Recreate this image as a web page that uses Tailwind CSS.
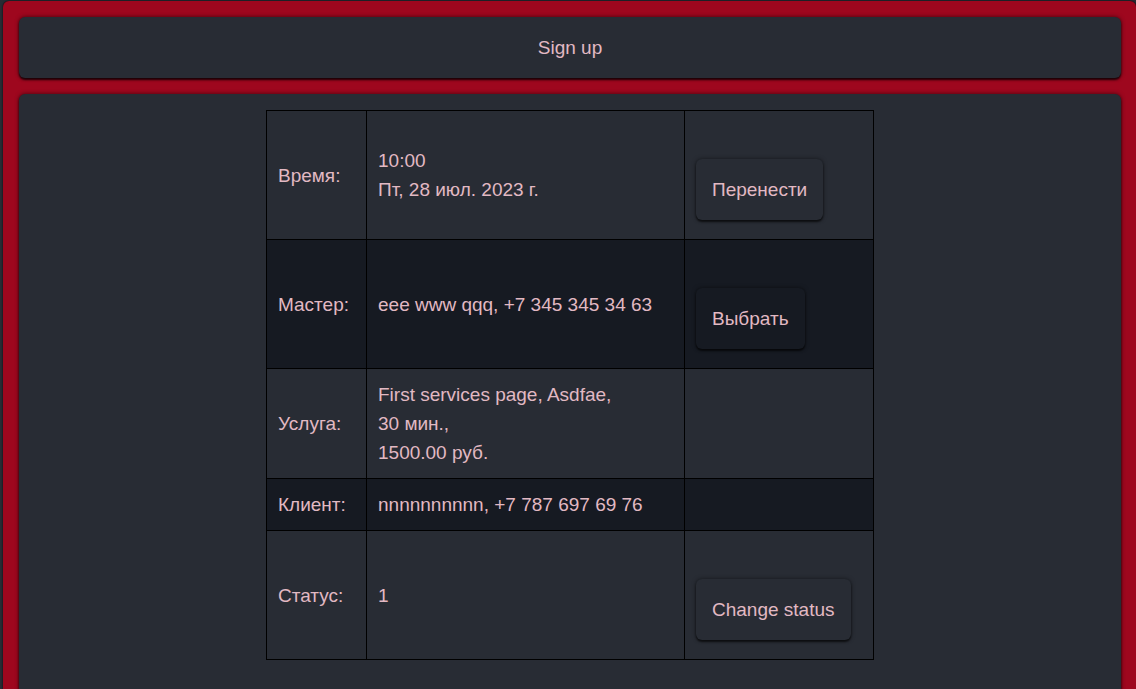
<!DOCTYPE html>
<html lang="ru">
<head>
<meta charset="utf-8">
<meta name="viewport" content="width=device-width, initial-scale=1">
<title>Sign up</title>
<script src="https://cdn.jsdelivr.net/npm/@tailwindcss/browser@4"></script>
</head>
<body class="bg-[#282c34] font-['Liberation_Sans',Arial,sans-serif] text-[19px] leading-[29px] text-[#e2b9c3]">
<main class="mt-px ml-[3px] flex min-h-[calc(100vh-1px)] flex-col gap-4 rounded-t-md bg-[#9e071e] pt-4 pr-[15px] pl-4 shadow-[0_0_2px_#000]">
  <button type="button" class="w-full rounded-md bg-[#282c34] p-4 text-center shadow-[0_2px_2px_rgb(0_0_0/0.75),0_0_4px_rgb(0_0_0/0.6)]">Sign up</button>
  <section class="flex grow flex-col items-center rounded-t-md bg-[#282c34] p-4 pb-8 shadow-[0_2px_2px_rgb(0_0_0/0.75),0_0_4px_rgb(0_0_0/0.6)]">
    <table class="w-[608px] max-w-full table-fixed border-collapse border border-black text-left [&_td]:border [&_td]:border-black [&_td]:px-[11px] [&_td]:py-[11px] [&_th]:border [&_th]:border-black [&_th]:px-[11px] [&_th]:py-[11px] [&_th]:font-normal">
      <colgroup><col class="w-[100px]"><col class="w-[318px]"><col class="w-[189px]"></colgroup>
      <tbody>
        <tr class="h-[129px]">
          <th scope="row">Время:</th>
          <td>10:00<br>Пт, 28 июл. 2023 г.</td>
          <td><button type="button" class="mt-[29px] block rounded-md p-4 shadow-[0_2px_2px_rgb(0_0_0/0.6),0_0_4px_rgb(0_0_0/0.5)]">Перенести</button></td>
        </tr>
        <tr class="h-[129px] bg-[#161a22]">
          <th scope="row">Мастер:</th>
          <td>eee www qqq, +7 345 345 34 63</td>
          <td><button type="button" class="mt-[29px] block rounded-md p-4 shadow-[0_2px_2px_rgb(0_0_0/0.6),0_0_4px_rgb(0_0_0/0.5)]">Выбрать</button></td>
        </tr>
        <tr>
          <th scope="row">Услуга:</th>
          <td>First services page, Asdfae,<br>30 мин.,<br>1500.00 руб.</td>
          <td></td>
        </tr>
        <tr class="bg-[#161a22]">
          <th scope="row">Клиент:</th>
          <td>nnnnnnnnnn, +7 787 697 69 76</td>
          <td></td>
        </tr>
        <tr class="h-[129px]">
          <th scope="row">Статус:</th>
          <td>1</td>
          <td><button type="button" class="mt-[29px] block rounded-md p-4 shadow-[0_2px_2px_rgb(0_0_0/0.6),0_0_4px_rgb(0_0_0/0.5)]">Change status</button></td>
        </tr>
      </tbody>
    </table>
  </section>
</main>
</body>
</html>
